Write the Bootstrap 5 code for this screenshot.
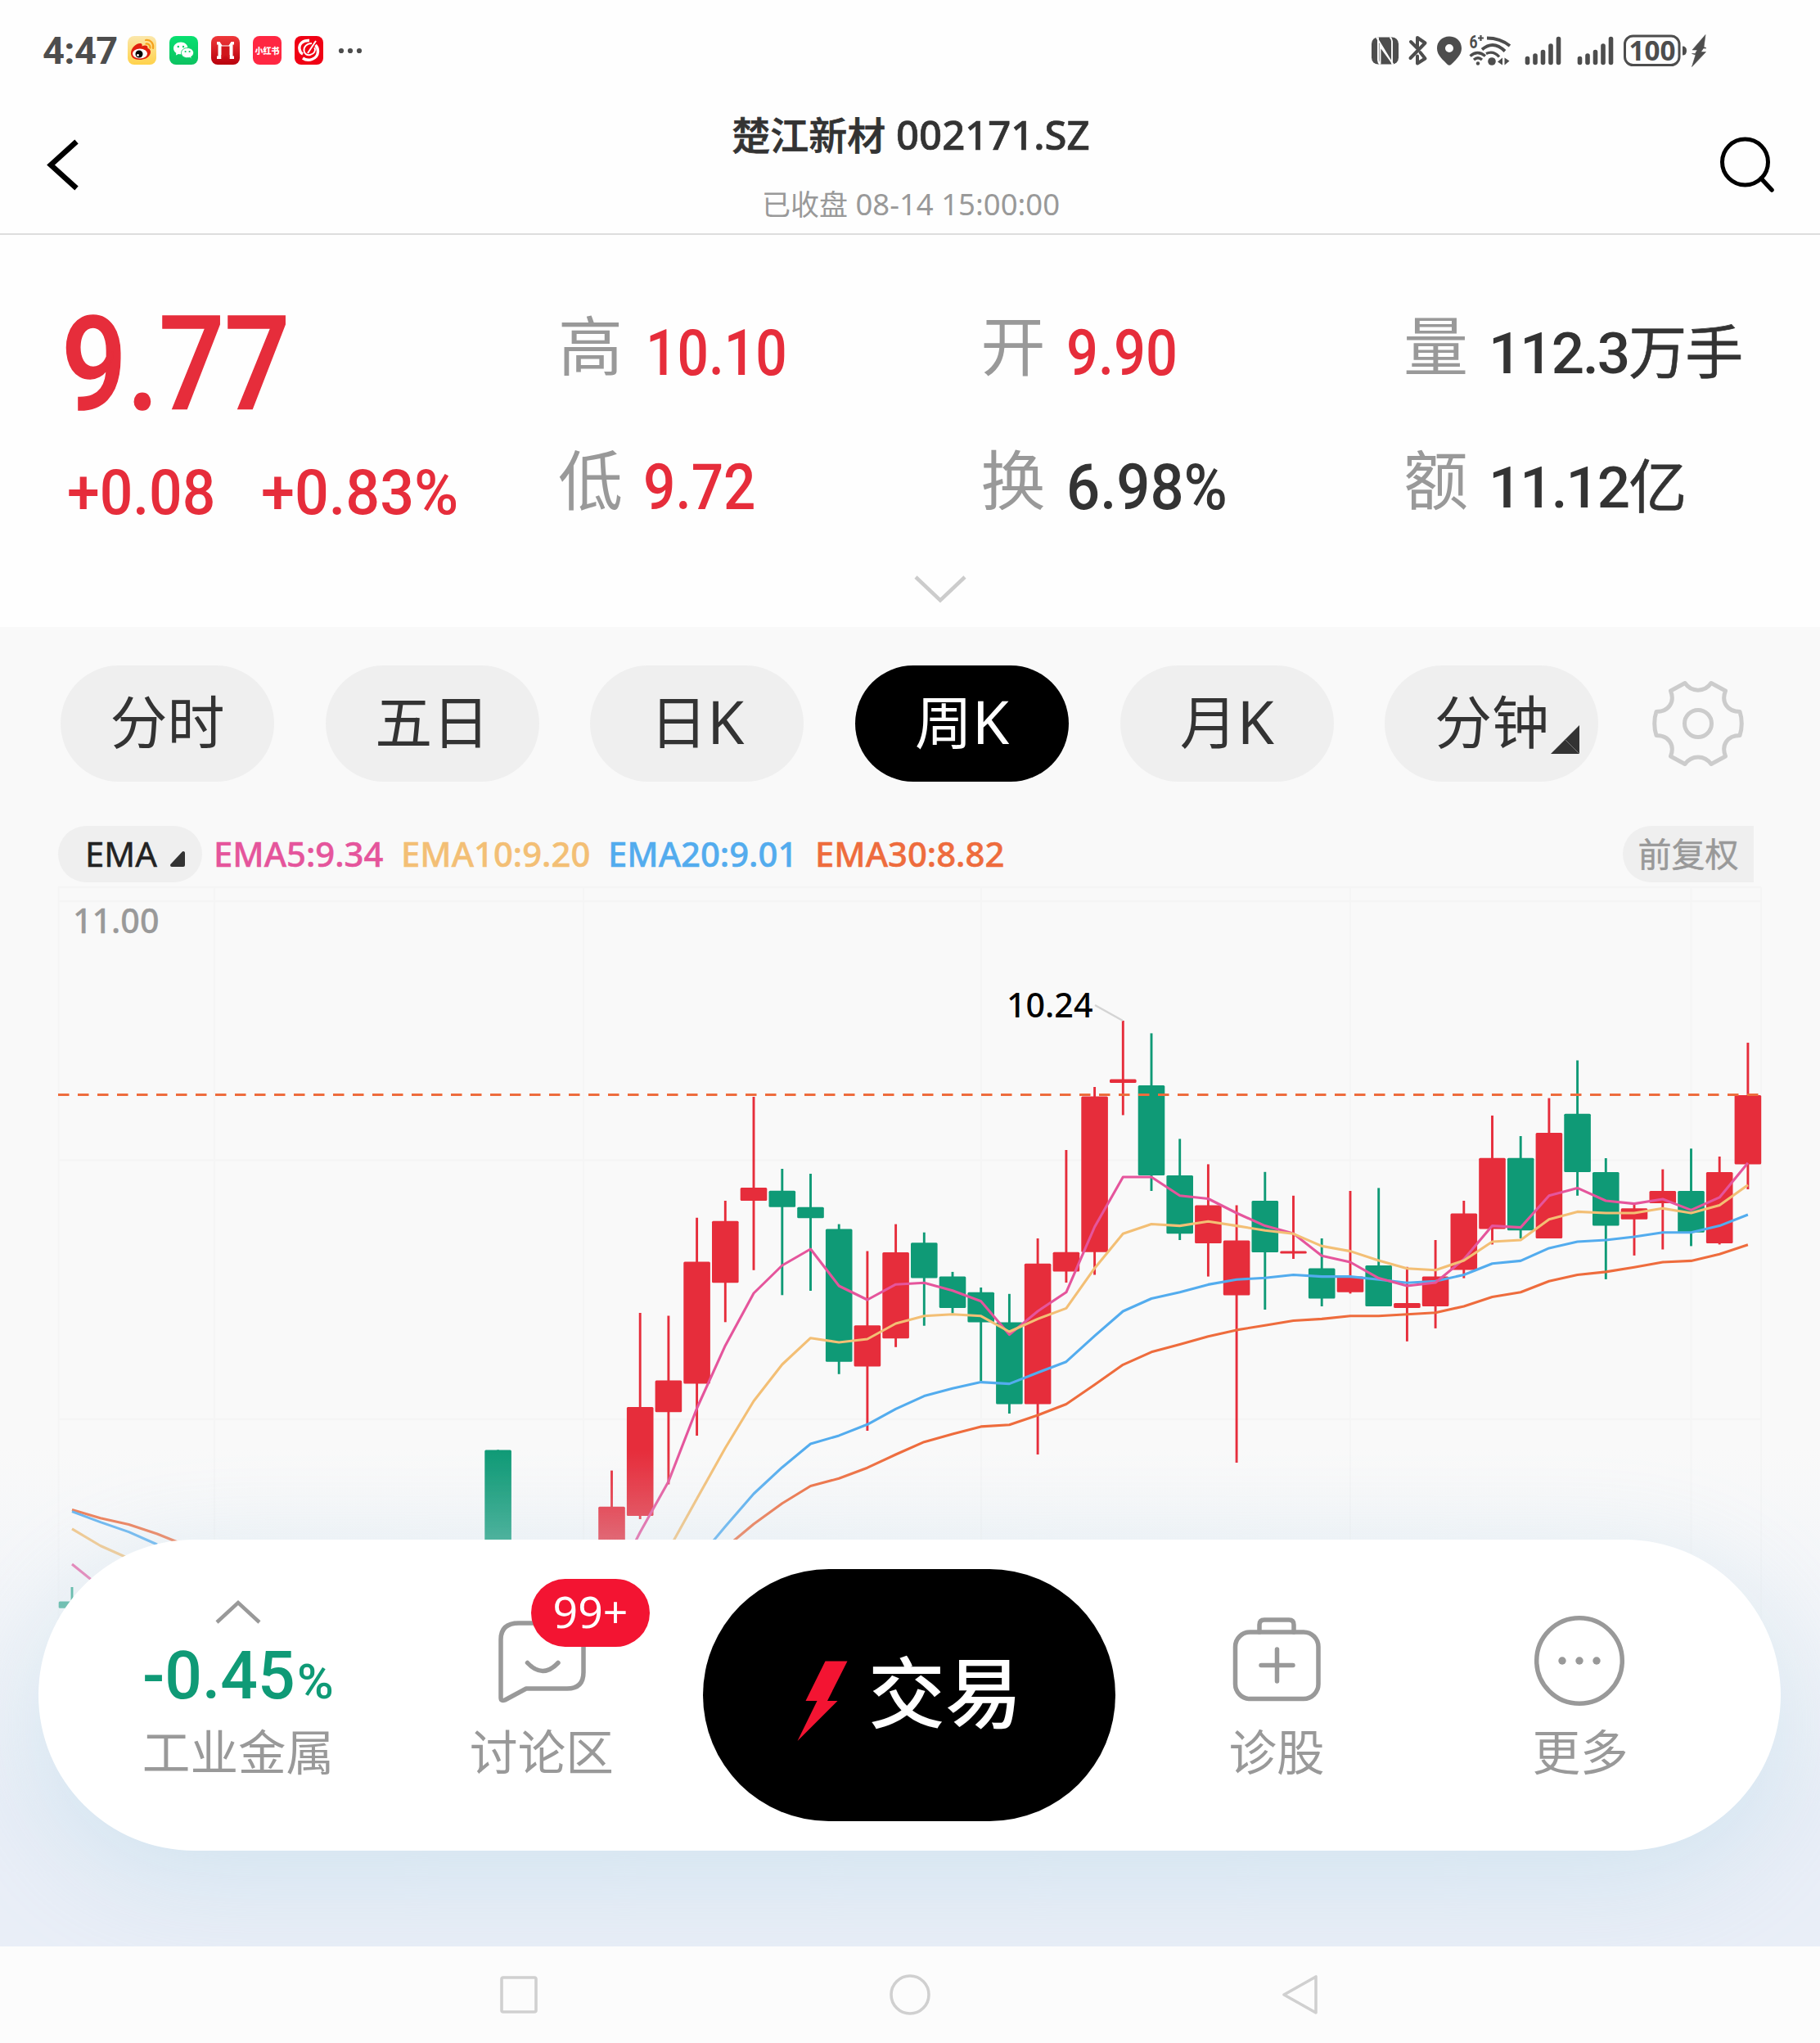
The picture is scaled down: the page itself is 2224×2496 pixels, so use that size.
<!DOCTYPE html>
<html lang="zh-CN">
<head>
<meta charset="utf-8">
<meta name="viewport" content="width=device-width, initial-scale=1">
<title>楚江新材 002171.SZ</title>
<link href="https://cdn.jsdelivr.net/npm/bootstrap@5.3.0/dist/css/bootstrap.min.css" rel="stylesheet">
<style>
  :root { --up:#e62d3b; --down:#0f9a76; --ink:#333; --mute:#999; }
  body { width:2224px; height:2496px; overflow:hidden; background:#fefefe; color:var(--ink);
         font-family:"Noto Sans","Noto Sans CJK SC",sans-serif; }
  svg { display:block; flex:none; }
  .cjk { font-family:"Noto Sans CJK SC",sans-serif; }
  .din { font-family:Roboto,"Noto Sans CJK SC",sans-serif; font-weight:500; white-space:nowrap; }
  .squeeze { display:inline-block; transform-origin:left center; transform:scaleX(var(--sx,.93)); }
  .t-up { color:var(--up); } .t-down { color:var(--down); } .t-mute { color:var(--mute); }

  .status-bar { height:122px; padding:2px 139px 0 52px; color:#4d4d4d; }
  .status-bar .clock { font:700 47px/60px Roboto,sans-serif; width:104px; letter-spacing:-.6px; padding-top:1px; }
  .app-ico { width:35px; height:35px; margin-right:16px; }

  .title-bar { height:165px; border-bottom:2px solid #ddd; padding:0 54px 0 56px; }
  .stock-name { font-size:49px; line-height:66px; font-weight:500; padding-top:8px; -webkit-text-stroke:.7px currentColor; }
  .stock-name .cjk { font-size:47px; }
  .stock-time { font-size:36.5px; line-height:50px; margin-top:26px; }
  .stock-time .cjk { font-size:35px; }

  .quote { height:479px; padding-top:77px; }
  .price-col { width:682px; padding-left:75px; }
  .last-price { font-size:160px; line-height:163px; height:160px; --sx:.88; -webkit-text-stroke:1.5px currentColor; }
  .delta { font-size:76px; line-height:80px; margin-top:38px; padding-left:7px; --sx:.94; }
  .stat-grid { width:1542px; }
  .stat { width:516.5px; height:100px; margin-bottom:64px; }
  .stat .lbl { font-size:79px; line-height:100px; margin-top:5px; width:76px; }
  .stat .val { font-size:77px; line-height:100px; margin:18px 0 0 28px; }
  .stat .val-s { font-size:71px; letter-spacing:-2px; margin:11px 0 0 28px; }
  .stat .val-s .cjk { font-weight:400; -webkit-text-stroke:.6px currentColor; }

  .chart-panel { height:1613px; background:#f9f9f9; }
  .period-row { padding:47px 0 0 74px; height:243px; }
  .period { width:261px; height:142px; margin-right:62.7px; background:#efefef; font-size:73px; line-height:131px; }
  .period.on { background:#000; color:#fff; }
  .period .cjk, .period.cjk { font-size:70px; }
  .tick { position:absolute; right:23px; bottom:34px; }
  .ema-row { height:72px; padding-left:71px; font-size:41.8px; line-height:67px; font-weight:500; -webkit-text-stroke:.5px currentColor; }
  .ema-pick { width:176px; height:69px; background:#efefef; border-radius:35px; padding-left:33px; font-weight:400; color:#222; }
  .adj { width:160px; height:69px; background:#efefef; border-radius:35px 0 0 35px; font-size:41px; line-height:65px; margin-right:81px; }

  .veil { left:0; right:0; bottom:0; height:608px; background:linear-gradient(rgba(233,238,247,0),rgba(233,238,247,1) 440px); }
  .dock { left:47px; top:1115px; width:2129px; height:380px; border-radius:190px; background:#fff;
          box-shadow:0 34px 130px rgba(165,208,228,.33); }
  .dock-item { position:absolute; top:0; width:260px; height:380px; }
  .dock-item .cap { font-size:58.6px; line-height:70px; position:absolute; top:222px; left:0; right:0; }
  .trade { position:absolute; left:812px; top:36px; width:504px; height:308px; border-radius:154px; background:#000; color:#fff; }
  .trade .cjk { font-size:94px; line-height:120px; font-weight:500; }
  .bubble { position:absolute; left:602px; top:48px; width:145px; height:83px; border-radius:42px; background:#f31432; color:#fff; font-size:53.500px; line-height:79px; }
  .nav-keys { height:118px; background:#fcfcfc; position:relative; z-index:1; }
</style>
</head>
<body class="m-0 d-flex flex-column">

<header class="status-bar d-flex align-items-center">
  <div class="clock">4:47</div>
  <svg class="app-ico" viewBox="0 0 35 35"><defs><linearGradient id="wb" x2="0" y2="1"><stop stop-color="#fbe7ab"/><stop offset="1" stop-color="#ffd24a"/></linearGradient></defs><rect width="35" height="35" rx="8" fill="url(#wb)"/><path d="M4 21C4 15 10 9 15 9c3 0 3 2 2.500 3.500C21 11 25 11 24.500 15c4 1 4 5 3 7-2 5-8 7-13 7C8 29 4 26 4 21z" fill="#e1200f"/><ellipse cx="15" cy="21.500" rx="9" ry="6" fill="#fff"/><circle cx="14" cy="22" r="4.500"/><circle cx="12.500" cy="23.500" r="1.400" fill="#fff"/><path d="M22 5c6-1 10 4 9 10M22.500 9.500c3-.5 5.500 2 5 5" fill="none" stroke="#f5a11c" stroke-width="2.200" stroke-linecap="round"/></svg>
  <svg class="app-ico" viewBox="0 0 35 35"><defs><linearGradient id="wc" x2="0" y2="1"><stop stop-color="#08e070"/><stop offset="1" stop-color="#0cc260"/></linearGradient></defs><rect width="35" height="35" rx="8" fill="url(#wc)"/><path d="M14 7.500c-5 0-9 3.200-9 7.500 0 2.500 1.200 4.500 3.300 5.800L8 23.500l3-1.600c1 .3 2 .4 3 .4 5 0 8.500-3.200 8.500-7.300S19 7.500 14 7.500z" fill="#fff"/><path d="M22 14.500c-4.300 0-7.500 2.700-7.500 6.200s3.200 6 7.500 6c1 0 1.800-.1 2.600-.4l2.600 1.500-.6-2.500c1.800-1.100 3-2.700 3-4.600 0-3.500-3.300-6.200-7.600-6.200z" fill="#fff" stroke="#0bcf66" stroke-width=".9"/><g fill="#0bcf66"><circle cx="10.800" cy="13" r="1.200"/><circle cx="17" cy="13" r="1.200"/><circle cx="19.600" cy="19" r="1.100"/><circle cx="24.600" cy="19" r="1.100"/></g></svg>
  <svg class="app-ico" viewBox="0 0 35 35"><defs><linearGradient id="rb" x2="0" y2="1"><stop stop-color="#f0383a"/><stop offset="1" stop-color="#b8000c"/></linearGradient></defs><rect width="35" height="35" rx="8" fill="url(#rb)"/><path d="M7 7h3.500l3 4.500h8l3-4.500H28v3.500h-1.500v14H28V28h-5.500v-5h-10v5H7v-3.500h1.500v-14H7z" fill="#fff"/><path d="M12.500 12.500h10V28l-5-4.500-5 4.500z" fill="#d0161c"/></svg>
  <svg class="app-ico" viewBox="0 0 35 35"><rect width="35" height="35" rx="8" fill="#ff2742"/><text x="17.500" y="21.800" text-anchor="middle" font-family="Noto Sans CJK SC" font-size="10.500" font-weight="900" fill="#fff" textLength="30" lengthAdjust="spacingAndGlyphs">小红书</text></svg>
  <svg class="app-ico" viewBox="0 0 35 35"><rect width="35" height="35" rx="8" fill="#f00014"/><path d="M18 5.500C10 5 5 10 6 16c.4 3 2 5 4 6M10 27c7 5 18 1 18.500-8 .2-4-1-6-3-8" fill="none" stroke="#fff" stroke-width="3.400"/><path d="M26 6L16 21M21 9c-6 0-10 4-9.500 9 .5 4 4 6 7.500 5 5-1 7-5 5.500-9" fill="none" stroke="#fff" stroke-width="2"/></svg>
  <svg width="30" height="8" viewBox="0 0 30 8" style="margin-left:2px"><g fill="#4d4d4d"><circle cx="4" cy="4" r="3.100"/><circle cx="15" cy="4" r="3.100"/><circle cx="26" cy="4" r="3.100"/></g></svg>

  <svg class="ms-auto" width="409" height="64" viewBox="1676 29.500 409 64" fill="#4d4d4d">
    <rect x="1676" y="45" width="33" height="33" rx="8"/>
    <path d="M1684 45v28q0 3 2.500 5M1682 45l20 33M1701 78V50q0-3-2.500-5M1686.500 78V56l16 22" stroke="#fefefe" stroke-width="1.900" fill="none"/>
    <g fill="none" stroke="#4d4d4d" stroke-width="4" stroke-linejoin="round" stroke-linecap="round"><path d="M1724 50.500l8 8V45.500l9.500 6.500-18 18.500"/><path d="M1732 68v9l9.500-6-6-7.500"/></g>
    <path fill-rule="evenodd" d="M1771 44c-9 0-15 6.500-15 14.500 0 9 8 14.500 13 20 1 .9 3 .9 4 0 5-5.500 13-11 13-20 0-8-6-14.500-15-14.500zm0 9.500a5 5 0 1 1 0 10 5 5 0 0 1 0-10z"/>
    <text x="1795.500" y="58.500" font-family="Roboto" font-weight="700" font-size="22" textLength="10" lengthAdjust="spacingAndGlyphs">6</text>
    <path d="M1809.500 42.500v7M1806 46h7" stroke="#4d4d4d" stroke-width="2.200"/>
    <g fill="none" stroke="#4d4d4d" stroke-linecap="butt"><path d="M1817 46q16 0 28 9.500M1811 60q14-12 28 2" stroke-width="3.900"/><path d="M1796.500 68q9-8 18.500 0M1801 72.500q5-4.500 10 0M1816 65q9-4 16 4" stroke-width="3.300"/></g>
    <circle cx="1806" cy="77" r="2.200"/><circle cx="1823" cy="74.500" r="4.800"/><path d="M1836 70v9l-6-4zM1838.500 70v9l6-5z"/>
    <g stroke="#4d4d4d" stroke-width="5.600" stroke-linecap="round"><path d="M1866.500 71v5M1876 67.500V76M1885.500 63v13M1895 55.500V76M1904.500 47v29M1930.500 71v5M1940 67.500V76M1949.500 63v13M1959 55.500V76M1968.500 47v29"/></g>
    <rect x="1985.500" y="43.500" width="66.500" height="35.500" rx="10" fill="none" stroke="#4d4d4d" stroke-width="3"/>
    <text x="2019" y="73.500" text-anchor="middle" font-family="Open Sans" font-weight="700" font-size="33.500" textLength="57" lengthAdjust="spacingAndGlyphs">100</text>
    <path d="M2056 56q5 0 5 5.500t-5 5.500z"/>
    <path d="M2084 42l-16 18.500h6l-2.500 4.500h-4l4.500 1.500-4.500 14.500 17-18h-6l3-4.500h4.500l-4-1.500z" stroke="#4d4d4d" stroke-width=".6"/>
  </svg>
</header>

<div class="title-bar d-flex justify-content-between">
  <svg width="70" height="64" viewBox="0 0 70 64" style="margin-top:48px"><path d="M37.500 3L6 31.500 37.500 60" fill="none" stroke="#000" stroke-width="6.500"/></svg>
  <div class="text-center">
    <div class="stock-name"><span class="cjk">楚江新材</span> 002171.SZ</div>
    <div class="stock-time t-mute"><span class="cjk">已收盘</span> 08-14 15:00:00</div>
  </div>
  <svg width="70" height="70" viewBox="0 0 70 70" style="margin-top:44px"><circle cx="32.500" cy="32" r="28" fill="none" stroke="#000" stroke-width="5"/><path d="M52 52l13 14" stroke="#000" stroke-width="5.500" stroke-linecap="round"/></svg>
</div>

<section class="quote position-relative">
  <div class="d-flex">
    <div class="price-col">
      <div class="last-price din t-up"><span class="squeeze">9.77</span></div>
      <div class="delta din t-up d-flex"><span class="squeeze" style="width:237px">+0.08</span><span class="squeeze" style="--sx:.97">+0.83%</span></div>
    </div>
    <div class="stat-grid d-flex flex-wrap">
      <div class="stat d-flex"><span class="lbl cjk t-mute">高</span><span class="val din t-up squeeze" style="--sx:.88;margin-left:31px">10.10</span></div>
      <div class="stat d-flex"><span class="lbl cjk t-mute">开</span><span class="val din t-up squeeze" style="--sx:.89">9.90</span></div>
      <div class="stat d-flex" style="width:509px"><span class="lbl cjk t-mute">量</span><span class="val val-s din">112.3<span class="cjk">万手</span></span></div>
      <div class="stat d-flex"><span class="lbl cjk t-mute">低</span><span class="val din t-up squeeze" style="--sx:.9">9.72</span></div>
      <div class="stat d-flex"><span class="lbl cjk t-mute">换</span><span class="val din squeeze" style="--sx:.94">6.98%</span></div>
      <div class="stat d-flex" style="width:509px"><span class="lbl cjk t-mute">额</span><span class="val val-s din">11.12<span class="cjk">亿</span></span></div>
    </div>
  </div>
  <svg class="position-absolute" width="64" height="38" viewBox="0 0 64 38" style="left:1117px;top:415px"><path d="M2 3l30 28.500L62 3" fill="none" stroke="#ccc" stroke-width="4.500"/></svg>
</section>

<section class="chart-panel position-relative">
  <div class="period-row d-flex">
    <div class="period rounded-pill text-center cjk">分时</div>
    <div class="period rounded-pill text-center cjk">五日</div>
    <div class="period rounded-pill text-center"><span class="cjk">日</span>K</div>
    <div class="period rounded-pill text-center on"><span class="cjk">周</span>K</div>
    <div class="period rounded-pill text-center"><span class="cjk">月</span>K</div>
    <div class="period rounded-pill text-center position-relative cjk">分钟<svg class="tick" width="35" height="35"><path d="M35 0v35H0z" fill="#333"/><path d="M17.500 17.500L35 35" stroke="#777" stroke-width="1"/></svg></div>
    <svg width="116" height="116" viewBox="-58 -58 116 116" style="margin:13px 0 0 1px" fill="none" stroke="#ccc" stroke-width="5" stroke-linejoin="round">
      <path d="M-16-49.500C-8-38 8-38 16-49.500L33.500-40C28-26 36-14.500 51-14.500C54-6 54 6 51 14.500C36 14.500 28 26 33.500 40L16 49.500C8 38-8 38-16 49.500L-33.500 40C-28 26-36 14.500-51 14.500C-54 6-54-6-51-14.500C-36-14.500-28-26-33.500-40Z"/>
      <circle r="16.500"/>
    </svg>
  </div>
  <div class="ema-row d-flex">
    <div class="ema-pick d-flex">EMA<svg width="22" height="22" style="margin:29px 0 0 13px"><path d="M19 4v15H5z" fill="#333" stroke="#333" stroke-width="4" stroke-linejoin="round"/></svg></div>
    <span style="margin-left:14px;width:229px;color:#e5559c">EMA5:9.34</span>
    <span style="width:253px;color:#f3bf75">EMA10:9.20</span>
    <span style="width:253px;color:#53acee">EMA20:9.01</span>
    <span style="color:#ee6c3d">EMA30:8.82</span>
    <div class="adj cjk text-center t-mute ms-auto fw-normal">前复权</div>
  </div>
  <svg id="kline" width="2224" height="1297" viewBox="0 1081 2224 1297" font-family="Noto Sans" font-size="41.200" font-weight="500"></svg>

  <div class="veil position-absolute"></div>
  <div class="dock position-absolute">
    <div class="dock-item" style="left:114px">
      <svg class="position-absolute" width="56" height="32" viewBox="0 0 56 32" style="left:102px;top:73px"><path d="M2 28L28 4l26 24" fill="none" stroke="#999" stroke-width="4.500"/></svg>
      <div class="din t-down position-absolute d-flex align-items-baseline" style="left:13px;top:116px;font-size:82px;line-height:100px"><span class="squeeze" style="width:189px;--sx:.98">-0.45</span><span class="squeeze" style="font-size:59px;--sx:1.03">%</span></div>
      <div class="cap cjk t-mute text-center">工业金属</div>
    </div>
    <div class="dock-item" style="left:485px">
      <svg class="position-absolute" width="110" height="106" viewBox="608 1978 110 106" style="left:76px;top:97px" fill="none" stroke="#999" stroke-width="5.500" stroke-linecap="round" stroke-linejoin="round"><path d="M634 1983h57q22 0 22 20v40q0 20-20 20h-50l-26 14q-5 2-5-3v-71q0-20 22-20z"/><path d="M644.500 2031.500q18.500 20 37.500 0"/></svg>
      <div class="cap cjk t-mute text-center">讨论区</div>
    </div>
    <div class="bubble text-center">99+</div>
    <div class="trade d-flex align-items-center">
      <svg width="62" height="98" viewBox="974 2029.500 62 98" style="margin:14px 0 0 115px"><path d="M1008.500 2030h27L1011 2078.500h12.500L974.500 2127.500l24-49h-14z" fill="#f31432"/></svg>
      <span class="cjk" style="margin:-16px 0 0 25px">交易</span>
    </div>
    <div class="dock-item" style="left:1383px">
      <svg class="position-absolute" width="110" height="106" viewBox="1505 1975 110 106" style="left:75px;top:94px" fill="none" stroke="#999" stroke-width="5.500" stroke-linecap="round"><rect x="1509.500" y="1994" width="101.500" height="81.500" rx="18"/><path d="M1539 1994v-9q0-6 6-6h30q6 0 6 6v9M1541 2034.500h39M1560.500 2015v39"/></svg>
      <div class="cap cjk t-mute text-center">诊股</div>
    </div>
    <div class="dock-item" style="left:1754px">
      <svg class="position-absolute" width="112" height="112" viewBox="-56 -56 112 112" style="left:73px;top:92px"><circle r="52.300" fill="none" stroke="#999" stroke-width="5.500"/><g fill="#999"><circle cx="-21" r="4.700"/><circle r="4.700"/><circle cx="21" r="4.700"/></g></svg>
      <div class="cap cjk t-mute text-center">更多</div>
    </div>
  </div>
</section>

<nav class="nav-keys d-flex align-items-center">
  <svg width="46" height="46" style="margin-left:610.5px"><rect x="2" y="2" width="42" height="42" rx="2" fill="none" stroke="#d0d0d0" stroke-width="3.600"/></svg>
  <svg width="50" height="50" style="margin-left:430.5px"><circle cx="25" cy="25" r="23" fill="none" stroke="#d0d0d0" stroke-width="3.600"/></svg>
  <svg width="48" height="52" style="margin-left:428px"><path d="M43 4v44L4 26z" fill="none" stroke="#d0d0d0" stroke-width="3.600" stroke-linejoin="round"/></svg>
</nav>

<script src="https://cdn.jsdelivr.net/npm/bootstrap@5.3.0/dist/js/bootstrap.bundle.min.js"></script>
<script>
// Weekly candles: [index, direction, high, body top, body bottom, low] in chart units.
const candles = [
[0,'g',1939,1956.5,1964.7,1964],[15,'g',1771.4,1771.4,1960,1960],[19,'r',1796.6,1840.7,1960,1960],[20,'r',1604,1719,1852,1856],
[21,'r',1607.5,1686.5,1725.3,1813.5],[22,'r',1487.8,1541.6,1690.4,1754],[23,'r',1467,1491.7,1567.3,1615.3],
[24,'r',1340,1451,1467,1551.8],[25,'g',1428,1454.8,1474.7,1582.3],[26,'g',1434,1474.7,1488.3,1577],
[27,'g',1495.6,1501.4,1663.8,1678.8],[28,'r',1528.5,1619.2,1669.6,1748],[29,'r',1495.6,1530,1635.2,1645.8],
[30,'g',1505.7,1518.3,1561.5,1619.7],[31,'g',1553.9,1559.6,1598,1604.5],[32,'g',1573,1578.8,1615.5,1687.3],
[33,'g',1580.8,1615.5,1715.5,1727],[34,'r',1513,1543.7,1715.5,1777],[35,'r',1405,1529.8,1553.5,1567],
[36,'r',1328,1339.6,1529.8,1557.5],[37,'r',1247,1318.4,1323,1362.4],[38,'g',1262.4,1326,1436,1455],
[39,'g',1391.4,1436,1507.3,1515],[40,'r',1422.4,1472.6,1519,1559.6],[41,'r',1472.6,1515.5,1582.4,1787],
[42,'g',1431.8,1467,1530,1600],[43,'r',1460.8,1528.5,1531.5,1538],[44,'g',1513,1549.4,1586.5,1596],
[45,'r',1455,1559.6,1578.8,1580.4],[46,'g',1451.4,1546,1596,1596],[47,'r',1547.8,1592,1598,1638.8],
[48,'r',1515,1559.6,1596,1622.9],[49,'r',1467,1482.4,1551.4,1561.6],[50,'r',1362.9,1414.7,1501.6,1520.4],
[51,'g',1388,1414.7,1503.3,1513],[52,'r',1341.6,1384,1513,1513],[53,'g',1295.5,1360.8,1432,1460.8],
[54,'g',1415,1432,1497.6,1562.9],[55,'r',1470.6,1476.3,1489.8,1533.9],[56,'r',1428.6,1455,1470,1526.5],
[57,'g',1403.3,1455,1505.7,1522.4],[58,'r',1413,1432,1519,1520.4],[59,'r',1273.9,1338,1422.4,1453]];

// Moving averages: colour, the opening stretch, then values from a start index on.
const averages = [
['#ee6c3d',[1844.6,1854.8,1862.5,1874,1888],22,[1921,1891,1862,1836.8,1815.5,1806.3,1793.2,1777,1761.7,1752,1742.9,1740.8,1729,1715.5,1691.8,1667.3,1651.8,1642.4,1632.7,1624.9,1619.2,1613.5,1611.4,1607.8,1607.8,1605.7,1603.7,1596,1584.5,1578.8,1565.3,1557.5,1553.9,1548.2,1542,1540.4,1532.2,1520.8]],
['#53acee',[1846.6,1859.6,1871.6,1887],22,[1906.6,1865,1825,1792.7,1764,1753.9,1740.3,1721.4,1705.6,1696.3,1688.6,1690.6,1677,1663.7,1632.2,1602,1586.5,1578.8,1569.4,1563.3,1561.2,1557.5,1559.6,1559.6,1563.3,1567.3,1565.3,1557.5,1543.7,1540.4,1524.9,1517,1515,1511,1505.7,1505.7,1497.6,1484]],
['#e5559c',[1911,1939],19,[1940,1872,1810,1720.5,1643.9,1580,1546,1526,1571,1588,1569.2,1567.3,1576.7,1589.8,1630.6,1602,1578.8,1499,1438,1438,1460.8,1464.5,1482,1497.6,1507,1534.3,1542,1561.6,1571,1567,1538.4,1497.6,1499.6,1460.8,1451.4,1467,1470.6,1465,1478.4,1462.9,1420.8]],
['#f3bf75',[1867.8,1888.5,1904],21,[1893.5,1831,1769,1711.8,1667,1634.7,1640,1636,1617,1607.8,1605.7,1607.8,1627,1611.4,1598.4,1549.4,1507.3,1495.5,1497.6,1492.2,1497.6,1503.3,1507.3,1522.4,1528.6,1540,1549.8,1551.8,1540,1517,1515,1489.8,1480.4,1482,1482,1476.3,1482,1472.6,1447.8]]];

const X = i => +(88 + 34.71 * i).toFixed(1);
let s = '<g stroke="#f5f5f5" stroke-width="2.500">';
for (const y of [1084, 1101, 1417.5, 1734]) s += `<path d="M71 ${y}H2152"/>`;
for (const x of [71.5, 262, 713, 1199, 1650, 2066.5, 2152]) s += `<path d="M${x} 1084V2378" stroke-width="2"/>`;
s += '</g>';
for (const [i, d, hi, t, b, lo] of candles) {
  const c = d === 'r' ? '#e62d3b' : '#0f9a76';
  s += `<path d="M${X(i)} ${hi}V${lo}" stroke="${c}" stroke-width="2.900"/><rect x="${X(i) - 16.3}" y="${t}" width="32.600" height="${b - t}" rx="1.500" fill="${c}"/>`;
}
s += '<path d="M71 1337.500H2152" stroke="#ee6c3d" stroke-width="3" stroke-dasharray="13.500 10.500"/>';
for (const [c, head, from, vals] of averages) {
  const line = (o, v) => 'M' + v.map((y, k) => X(o + k) + ' ' + y).join('L');
  s += `<path d="${line(0, head)}${line(from, vals)}" fill="none" stroke="${c}" stroke-width="3.100" stroke-linejoin="round"/>`;
}
s += '<path d="M1338 1228l34 19" stroke="#d4d4d4" stroke-width="2.500"/>';
s += '<text x="1230" y="1243" fill="#000">10.24</text><text x="89" y="1140" fill="#999" stroke="#999" stroke-width=".3">11.00</text>';
document.getElementById('kline').innerHTML = s;
</script>
</body>
</html>
